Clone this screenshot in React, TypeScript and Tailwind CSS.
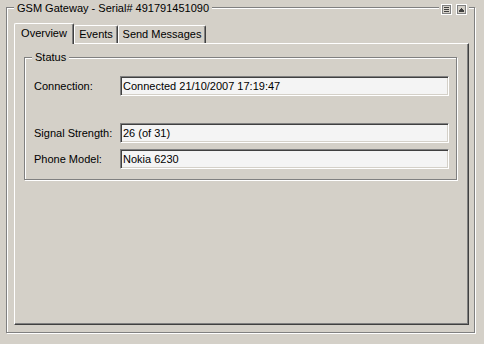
import React from "react";

const font = { fontFamily: '"Liberation Sans", Arial, sans-serif' };

function ListIcon() {
  return (
    <svg width="11" height="11" viewBox="0 0 11 11" shapeRendering="crispEdges">
      <rect x="0.5" y="0.5" width="10" height="10" fill="#d4d0c8" stroke="#ffffff" />
      <rect x="1.5" y="1.5" width="8" height="8" fill="none" stroke="#808080" />
      <rect x="3" y="3" width="5" height="1" fill="#404040" />
      <rect x="3" y="5" width="5" height="1" fill="#404040" />
      <rect x="3" y="7" width="5" height="1" fill="#404040" />
    </svg>
  );
}

function UpIcon() {
  return (
    <svg width="11" height="11" viewBox="0 0 11 11" shapeRendering="crispEdges">
      <rect x="0.5" y="0.5" width="10" height="10" fill="#d4d0c8" stroke="#ffffff" />
      <rect x="1.5" y="1.5" width="8" height="8" fill="none" stroke="#808080" />
      <rect x="5" y="4" width="1" height="1" fill="#404040" />
      <rect x="4" y="5" width="3" height="1" fill="#404040" />
      <rect x="3" y="6" width="5" height="1" fill="#404040" />
      <rect x="3" y="7" width="5" height="1" fill="#404040" />
    </svg>
  );
}

function Field({ label, value, className = "" }: { label: string; value: string; className?: string }) {
  return (
    <div className={"flex items-center " + className}>
      <div className="w-[86px] text-[11px] leading-[13px] text-black">{label}</div>
      <div className="w-[329px] h-[20px] flex items-center pl-[2px] bg-[#f4f4f4] border border-t-[#808080] border-l-[#808080] border-r-white border-b-white shadow-[inset_1px_1px_0_#404040,inset_-1px_-1px_0_#d4d0c8] text-[11px] leading-[13px] text-black">
        {value}
      </div>
    </div>
  );
}

export default function App() {
  return (
    <div className="w-[484px] h-[344px] bg-[#d4d0c8] pt-[7px] pl-[6px] overflow-hidden" style={font}>
      <div className="relative w-[469px] h-[326px] border border-[#808080] shadow-[inset_1px_1px_0_#ffffff,1px_1px_0_#ffffff] pl-[7px] pt-[15px]">
        <span className="absolute left-[7px] top-[-6px] px-[3px] bg-[#d4d0c8] text-[11px] leading-[13px] text-black whitespace-nowrap">
          GSM Gateway - Serial# 491791451090
        </span>
        <div className="absolute right-[5px] top-[-4px] flex gap-[4px] bg-[#d4d0c8] px-[2px]">
          <ListIcon />
          <UpIcon />
        </div>

        <div className="flex items-end h-[20px]">
          <div className="relative z-10 w-[60px] h-[21px] mb-[-1px] bg-[#d4d0c8] border-t border-l border-r border-t-white border-l-white border-r-[#404040] shadow-[inset_-1px_0_0_#808080] rounded-tl-[2px] rounded-tr-[2px] flex items-start justify-center pt-[3px] text-[11px] leading-[13px] text-black">
            Overview
          </div>
          <div className="w-[44px] h-[18px] border-t border-l border-r border-t-white border-l-white border-r-[#404040] shadow-[inset_-1px_0_0_#808080] rounded-tl-[2px] rounded-tr-[2px] flex items-start justify-center pt-[2px] text-[11px] leading-[13px] text-black">
            Events
          </div>
          <div className="w-[88px] h-[18px] border-t border-l border-r border-t-white border-l-white border-r-[#404040] shadow-[inset_-1px_0_0_#808080] rounded-tl-[2px] rounded-tr-[2px] flex items-start justify-center pt-[2px] text-[11px] leading-[13px] text-black">
            Send Messages
          </div>
        </div>

        <div className="w-[455px] h-[282px] border border-t-white border-l-white border-r-[#404040] border-b-[#404040] shadow-[inset_-1px_-1px_0_#808080] pl-[9px] pt-[13px]">
          <div className="relative w-[433px] h-[123px] border border-[#808080] shadow-[inset_1px_1px_0_#ffffff,1px_1px_0_#ffffff] pl-[9px] pt-[18px]">
            <span className="absolute left-[7px] top-[-7px] px-[3px] bg-[#d4d0c8] text-[11px] leading-[13px] text-black">
              Status
            </span>
            <Field label="Connection:" value="Connected 21/10/2007 17:19:47" />
            <Field label="Signal Strength:" value="26 (of 31)" className="mt-[27px]" />
            <Field label="Phone Model:" value="Nokia 6230" className="mt-[6px]" />
          </div>
        </div>
      </div>
    </div>
  );
}
